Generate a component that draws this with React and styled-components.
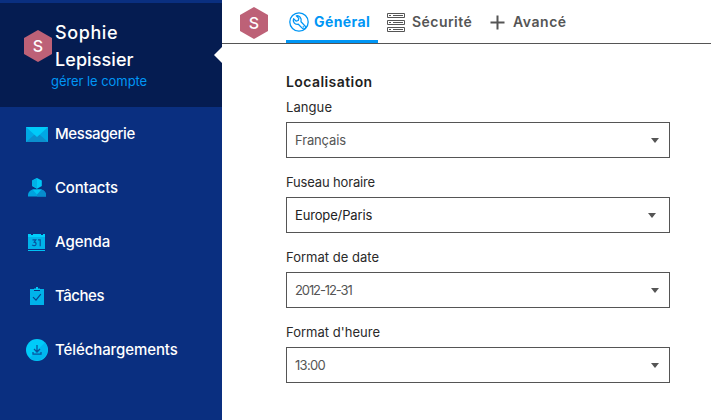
import React from 'react';
import styled, { createGlobalStyle } from 'styled-components';

const GlobalStyle = createGlobalStyle`
  * { box-sizing: border-box; }
  body { margin: 0; background: #fff; font-family: Inter, "Open Sans", sans-serif; }
`;

const Page = styled.div`
  display: flex;
  width: 711px;
  height: 420px;
  overflow: hidden;
`;

const Text = styled.span`
  white-space: nowrap;
  letter-spacing: ${(p) => p.$track || 0}px;
`;

const Sidebar = styled.aside`
  flex: 0 0 222px;
  padding-top: 3px;
  background: #0a2f80;
  color: #fff;
`;

const Profile = styled.div`
  position: relative;
  display: flex;
  height: 104px;
  padding: 16px 0 0 24px;
  background: #051c51;
`;

const Pointer = styled.svg`
  position: absolute;
  right: 0;
  top: 44px;
`;

const Avatar = styled.svg`
  display: block;
  flex: none;
  margin-top: ${(p) => p.$top}px;
`;

const AvatarLetter = styled.text`
  font: 500 16px Inter, sans-serif;
  fill: #fff;
  text-anchor: middle;
`;

const Identity = styled.div`
  display: flex;
  flex-direction: column;
  align-items: flex-start;
  padding-left: 3px;
  font-size: 18px;
  font-weight: 500;
  line-height: 27px;
`;

const AccountLink = styled.a`
  margin-left: -4px;
  color: #0096f5;
  font-size: 13px;
  font-weight: 400;
  line-height: 16px;
`;

const Menu = styled.nav`
  display: flex;
  flex-direction: column;
`;

const MenuItem = styled.a`
  display: flex;
  align-items: center;
  height: 54px;
  padding-left: 25px;
  font-size: 15px;
  font-weight: 500;
  line-height: 20px;
`;

const MenuLabel = styled(Text)`
  padding-bottom: 1px;
`;

const MenuIcon = styled.svg`
  flex: none;
  margin-right: 6px;
`;

const Main = styled.main`
  flex: 1;
  min-width: 0;
`;

const TopBar = styled.header`
  display: flex;
  height: 44px;
  padding-left: 18px;
  border-bottom: 1px solid #555;
`;

const Tabs = styled.nav`
  display: flex;
  margin-left: 18px;
`;

const Tab = styled.a`
  display: flex;
  align-items: center;
  width: ${(p) => p.$width}px;
  height: 43px;
  padding: 4px 0 0 ${(p) => p.$inset}px;
  border-bottom: 3px solid ${(p) => (p.$active ? '#0096f5' : 'transparent')};
  color: ${(p) => (p.$active ? '#0096f5' : '#555')};
  font-size: 14px;
  font-weight: ${(p) => (p.$active ? 700 : 600)};
`;

const TabLabel = styled(Text)`
  padding-bottom: 2px;
`;

const TabIcon = styled.svg`
  flex: none;
  margin-right: ${(p) => p.$gap}px;
`;

const Form = styled.form`
  width: 448px;
  padding: 29px 0 0 64px;
`;

const Heading = styled.h2`
  margin: 0;
  color: #1f1f1f;
  font-size: 14px;
  font-weight: 600;
  line-height: 18px;
`;

const Field = styled.div`
  display: flex;
  flex-direction: column;
  height: 75px;
  padding-top: 7px;
`;

const Label = styled.label`
  height: 24px;
  color: #2a2a2a;
  font-size: 13px;
  line-height: 18px;
`;

const Select = styled.div`
  display: flex;
  align-items: center;
  justify-content: space-between;
  height: 36px;
  padding: 0 ${(p) => (p.$strong ? 13 : 10)}px 0 8px;
  border: 1px solid #555;
  color: ${(p) => (p.$strong ? '#222' : '#555')};
  font-size: 13px;
`;

const Hexagon = ({ top }) => (
  <Avatar width="28" height="32" viewBox="0 0 28 32" $top={top}>
    <path d="M14 0 28 8v16l-14 8L0 24V8z" fill="#bd6177" />
    <AvatarLetter x="14" y="21.6">S</AvatarLetter>
  </Avatar>
);

const icons = {
  mail: (
    <>
      <path d="M1 5h22v15H1z" fill="#00a8e5" />
      <path d="M1 20 9 13h6l8 7z" fill="#0b8fce" />
      <path d="M1 5h22L12 15z" fill="#00cbf9" />
    </>
  ),
  contact: (
    <>
      <path d="M12 2 16.800 4.600v5.400L12 12.800 7.200 10V4.600z" fill="#00c8f8" />
      <path d="M12 2v10.800L7.200 10V4.600z" fill="#00b2e8" />
      <path d="M3 20.500v-1.500c0-3 2.600-5.500 5.500-5.500h7c2.900 0 5.500 2.500 5.500 5.500v1.500z" fill="#00a3df" />
      <path d="M12 20.500v-7h3.500c2.900 0 5.500 2.500 5.500 5.500v1.500z" fill="#078ccd" />
      <path d="M7.500 13.500h9L12 18.500z" fill="#00c4f3" />
    </>
  ),
  calendar: (
    <>
      <path d="M3 4h3v1h2V4h8v1h2V4h2v16H3z" fill="#00b3ea" />
      <path d="M3 4h3v1h2V4h8v1h2V4h2v3H3z" fill="#00cdfb" />
      <path d="M3 20.500h17" stroke="#00c2f4" />
      <path d="M3 19.500h17" stroke="#0a2f80" />
      <path d="M7.500 9.800h3.300L9.200 12.200c2.700 0 2.300 3.500 0 3.500-1 0-1.500-.3-2-.8M13 9.800h2.200V16.200" fill="none" stroke="#07539f" strokeWidth="1.200" />
    </>
  ),
  task: (
    <>
      <path d="M5 5h4v2h6V5h4v16H5z" fill="#00b3ea" />
      <path d="M9 4.500h2V3h2v1.500h2V6H9z" fill="#00c8f8" />
      <path d="m8 13.200 3 3 4.800-6" fill="none" stroke="#07438f" strokeWidth="1.200" />
    </>
  ),
  download: (
    <>
      <circle cx="12" cy="12" r="11" fill="#00cbf9" />
      <path d="M20 4.500A11 11 0 0 1 4.500 20z" fill="#00b7ef" />
      <path d="M12 7v6.500M9 11l3 3 3-3M8 14v2.200h8V14" fill="none" stroke="#07559f" strokeWidth="1.300" />
    </>
  ),
};

const menu = [
  ['mail', 'Messagerie', -0.4],
  ['contact', 'Contacts', -0.2],
  ['calendar', 'Agenda', -0.05],
  ['task', 'Tâches', -0.45],
  ['download', 'Téléchargements', -0.09],
];

const fields = [
  { label: 'Langue', track: 0.08, value: 'Français', valueTrack: -0.14 },
  { label: 'Fuseau horaire', track: -0.16, value: 'Europe/Paris', valueTrack: -0.15 },
  { label: 'Format de date', track: 0.02, value: '2012-12-31', valueTrack: -1.1 },
  { label: "Format d'heure", track: 0.02, value: '13:00', valueTrack: -0.7 },
].map((f) => ({ ...f, strong: f.value === 'Europe/Paris' }));

const SettingsIcon = () => (
  <TabIcon width="20" height="20" viewBox="0 0 20 20" $gap={5} fill="none" stroke="currentColor" strokeWidth="1.300">
    <circle cx="10" cy="10" r="9.200" />
    <path d="M7.300 3.900 9.800 6.400 9.200 8.500 7.100 9.100 4.600 6.700C3.500 9.600 5.600 12.900 9.300 12.200L13.700 16.600C15.400 18 17.600 15.800 16.200 14.100L12 9.700C13 5.900 10.200 3.200 7.300 3.900z" strokeLinejoin="round" />
    <circle cx="14.400" cy="14.800" r=".5" strokeWidth=".8" />
  </TabIcon>
);

const ServerIcon = () => (
  <TabIcon width="18" height="19" viewBox="0 0 18 19" $gap={7} fill="none" stroke="currentColor">
    {[0, 7, 14].map((y) => (
      <g key={y} transform={`translate(0 ${y})`}>
        <path d="M.5.500h17v4H.5z" />
        <path d="M2 2.500h2M6 2.500h10" />
      </g>
    ))}
  </TabIcon>
);

const PlusIcon = () => (
  <TabIcon width="15" height="15" viewBox="0 0 15 15" $gap={8} stroke="currentColor" strokeWidth="2">
    <path d="M7.500.500v14M.5 7.500h14" />
  </TabIcon>
);

const Caret = () => (
  <svg width="8" height="5" viewBox="0 0 8 5">
    <path d="M0 0h8L4 5z" fill="#555" />
  </svg>
);

export default function App() {
  return (
    <>
      <GlobalStyle />
      <Page>
        <Sidebar>
          <Profile>
            <Hexagon top={11} />
            <Identity>
              <Text $track={0.6}>Sophie</Text>
              <Text $track={0.08}>Lepissier</Text>
              <AccountLink><Text $track={-0.06}>gérer le compte</Text></AccountLink>
            </Identity>
            <Pointer width="8" height="16" viewBox="0 0 8 16">
              <path d="M8 0v16L0 8z" fill="#fff" />
            </Pointer>
          </Profile>
          <Menu>
            {menu.map(([icon, label, track]) => (
              <MenuItem key={label}>
                <MenuIcon width="24" height="24" viewBox="0 0 24 24">{icons[icon]}</MenuIcon>
                <MenuLabel $track={track}>{label}</MenuLabel>
              </MenuItem>
            ))}
          </Menu>
        </Sidebar>
        <Main>
          <TopBar>
            <Hexagon top={7} />
            <Tabs>
              <Tab $active $width={92} $inset={3}>
                <SettingsIcon />
                <TabLabel $track={0.4}>Général</TabLabel>
              </Tab>
              <Tab $width={104} $inset={9}>
                <ServerIcon />
                <TabLabel $track={0.45}>Sécurité</TabLabel>
              </Tab>
              <Tab $width={92} $inset={8}>
                <PlusIcon />
                <TabLabel $track={0.55}>Avancé</TabLabel>
              </Tab>
            </Tabs>
          </TopBar>
          <Form>
            <Heading><Text $track={0.42}>Localisation</Text></Heading>
            {fields.map((f) => (
              <Field key={f.label}>
                <Label><Text $track={f.track}>{f.label}</Text></Label>
                <Select $strong={f.strong}>
                  <Text $track={f.valueTrack}>{f.value}</Text>
                  <Caret />
                </Select>
              </Field>
            ))}
          </Form>
        </Main>
      </Page>
    </>
  );
}
